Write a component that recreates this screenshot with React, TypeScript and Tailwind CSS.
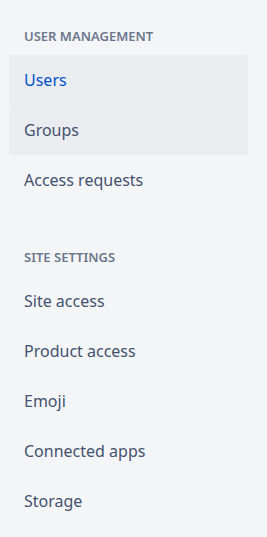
const sections = [
  {
    title: 'USER MANAGEMENT',
    items: ['Users', 'Groups', 'Access requests'],
  },
  {
    title: 'SITE SETTINGS',
    items: ['Site access', 'Product access', 'Emoji', 'Connected apps', 'Storage'],
  },
];

const active = 'Users';
const hovered = 'Groups';

export default function App() {
  return (
    <div
      className="min-h-screen w-full bg-[#f4f5f7] pl-[9px] pr-[19px] pt-[28px]"
      style={{ fontFamily: '"Noto Sans", "Open Sans", sans-serif' }}
    >
      {sections.map((section, i) => (
        <div key={section.title} className={i > 0 ? 'mt-[44px]' : ''}>
          <div className="mb-[11px] h-4 px-[15px] text-[13px] font-semibold leading-4 text-[#6b778c]">
            {section.title}
          </div>
          <ul>
            {section.items.map((item) => {
              const isActive = item === active;
              const isHover = item === hovered;
              return (
                <li
                  key={item}
                  className={
                    'flex h-[50px] items-center rounded-[3px] px-[15px] text-[16px] ' +
                    (isActive
                      ? 'bg-[#ebecf0] text-[#0052cc]'
                      : isHover
                        ? 'bg-[#ebecf0] text-[#42526e]'
                        : 'text-[#42526e]')
                  }
                >
                  {item}
                </li>
              );
            })}
          </ul>
        </div>
      ))}
    </div>
  );
}
